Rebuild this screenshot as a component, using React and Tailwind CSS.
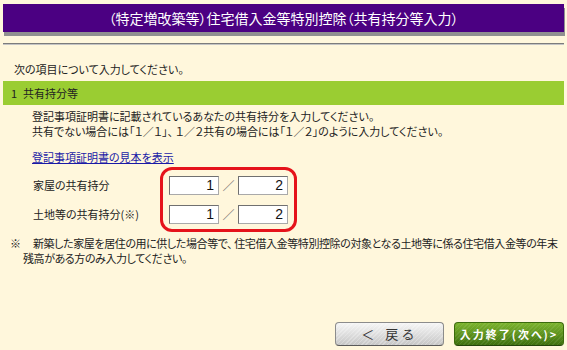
import React from 'react';

export default function App() {
  const rows = [
    { label: '家屋の共有持分', a: '1', b: '2' },
    { label: '土地等の共有持分(※)', a: '1', b: '2' },
  ];

  return (
    <div className="w-[567px] h-[350px] bg-[#fff7dc] px-[3px] pt-[4px] pb-[4px] flex flex-col text-[11px] text-[#222] font-['Noto_Sans_CJK_JP',sans-serif] [font-feature-settings:'palt']">
      {/* title */}
      <div className="h-[28px] bg-[#4b0082] shadow-[1px_4px_0_#909090] flex items-center justify-center text-white text-[14px]">
        （特定増改築等）住宅借入金等特別控除（共有持分等入力）
      </div>
      <div className="mt-[11px] h-[2px] border-t border-t-[#7c7c7c] border-b border-b-[#c4c4c4]" />

      <p className="mt-[17px] pl-[11px] leading-[15px]">次の項目について入力してください。</p>

      <div className="mt-[4px] h-[24px] bg-[#9acd32] flex items-center pl-[8px]">
        <span>1</span>
        <span className="ml-[6px]">共有持分等</span>
      </div>

      <div className="mt-[4px] pl-[29px] leading-[15px]">
        <p>登記事項証明書に記載されているあなたの共有持分を入力してください。</p>
        <p>共有でない場合には「１／１」、 １／２共有の場合には「１／２」のように入力してください。</p>
      </div>

      <div className="mt-[11px] pl-[29px] leading-[15px]">
        <a href="#" className="text-[#1a1aa6] underline">登記事項証明書の見本を表示</a>
      </div>

      {/* share inputs */}
      <div className="mt-[2px] flex">
        <div className="w-[157px] pl-[30px] pt-[9px] flex flex-col gap-[10px]">
          {rows.map((r) => (
            <div key={r.label} className="h-[19px] flex items-center">{r.label}</div>
          ))}
        </div>
        <div className="w-[137px] border-[3px] border-[#e5131b] rounded-[12px] pl-[6px] pr-[5px] pt-[6px] pb-[5px] flex flex-col gap-[10px]">
          {rows.map((r) => (
            <div key={r.label} className="flex items-center">
              <input readOnly value={r.a} className="w-[50px] h-[19px] bg-white border border-[#a9a9a9] border-t-[#707070] border-l-[#707070] text-right pr-[4px] text-[14px] font-['Liberation_Sans',sans-serif] text-[#111] outline-none" />
              <span className="w-[19px] text-center text-[#777] text-[12px]">／</span>
              <input readOnly value={r.b} className="w-[50px] h-[19px] bg-white border border-[#a9a9a9] border-t-[#707070] border-l-[#707070] text-right pr-[4px] text-[14px] font-['Liberation_Sans',sans-serif] text-[#111] outline-none" />
            </div>
          ))}
        </div>
      </div>

      <div className="mt-[4px] leading-[15px] tracking-[-0.4px]">
        <div className="flex whitespace-nowrap">
          <span className="w-[30px] pl-[7px]">※</span>
          <span>新築した家屋を居住の用に供した場合等で、 住宅借入金等特別控除の対象となる土地等に係る住宅借入金等の年末</span>
        </div>
        <div className="pl-[20px]">残高がある方のみ入力してください。</div>
      </div>

      {/* buttons */}
      <div className="mt-auto flex justify-end gap-[10px]">
        <button className="w-[109px] h-[24px] rounded-[4px] border border-[#8c8c8c] border-b-[#5a5a5a] text-[#333] text-[13px] tracking-[4px] [background:repeating-linear-gradient(135deg,rgba(255,255,255,0.25)_0_1px,transparent_1px_3px),linear-gradient(#f6f6f6,#c6c6c6)]">
          ＜ 戻る
        </button>
        <button className="w-[110px] h-[24px] rounded-[4px] border border-[#3a6a0c] border-b-[#24440a] text-white text-[11px] font-bold tracking-[2px] [background:repeating-linear-gradient(135deg,rgba(255,255,255,0.08)_0_1px,transparent_1px_3px),linear-gradient(#7cb42e,#3e700f)]">
          入力終了(次へ)&gt;
        </button>
      </div>
    </div>
  );
}
